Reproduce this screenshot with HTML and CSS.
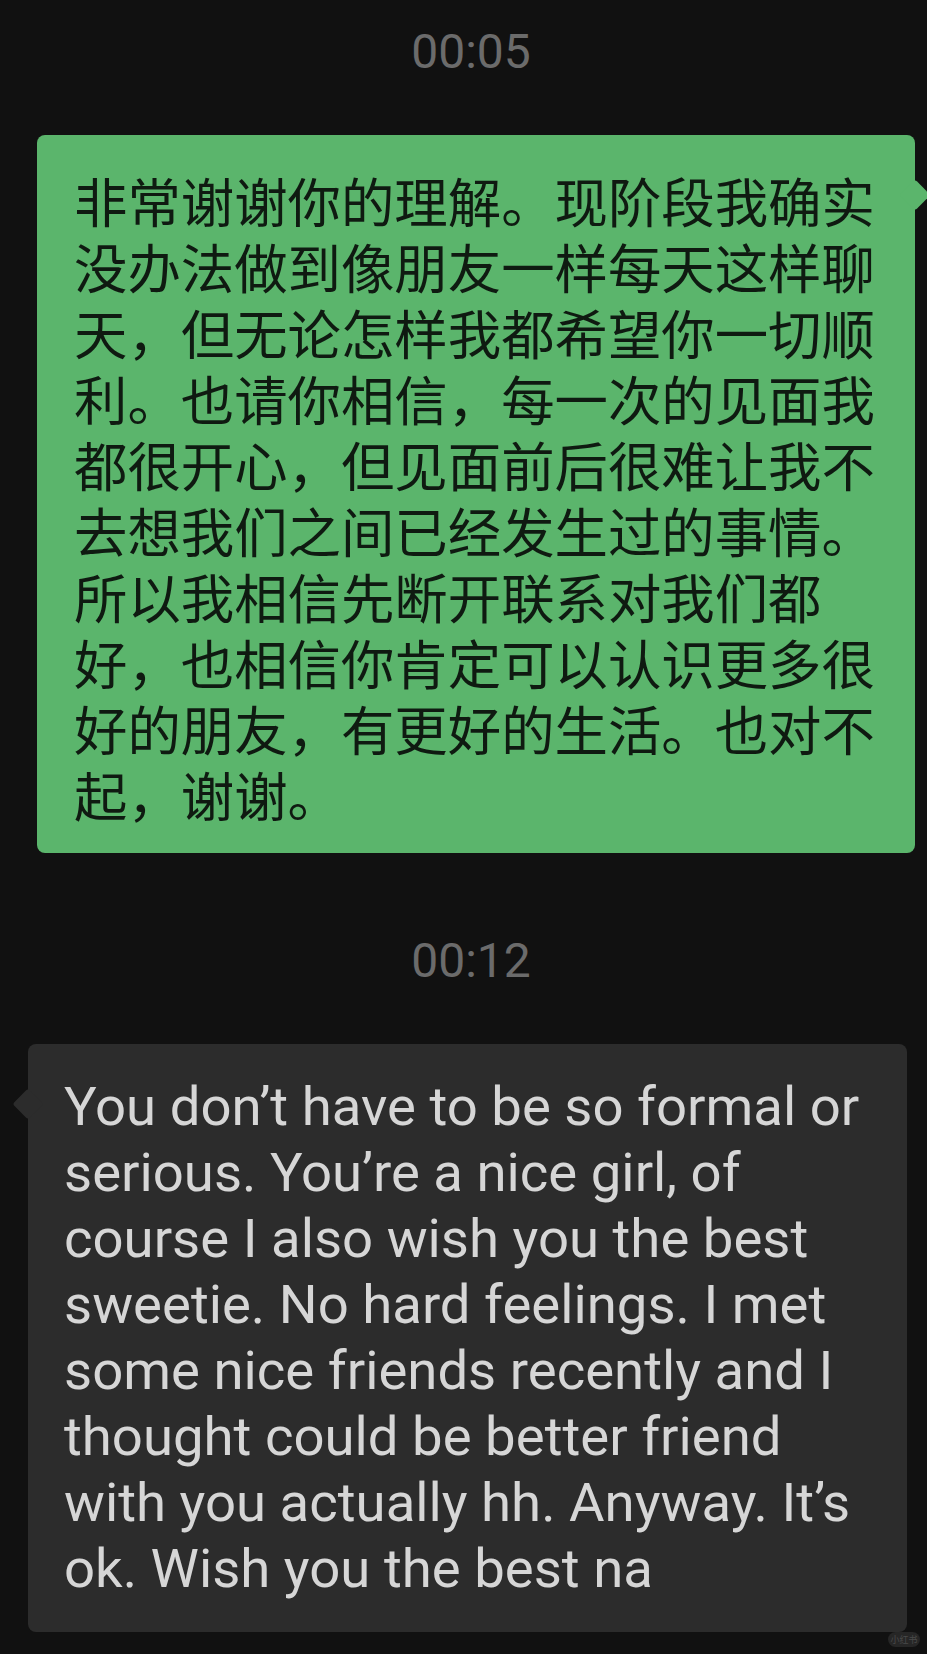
FILE: index.html
```html
<!DOCTYPE html>
<html lang="zh-CN">
<head>
<meta charset="utf-8">
<title>Chat</title>
<link rel="stylesheet" href="styles.css">
</head>
<body>
<main class="chat">
  <div class="time time-first">00:05</div>
  <div class="row row-sent">
    <div class="bubble bubble-sent">
      <p class="msg msg-zh">非常谢谢你的理解。现阶段我确实<br>没办法做到像朋友一样每天这样聊<br>天，但无论怎样我都希望你一切顺<br>利。也请你相信，每一次的见面我<br>都很开心，但见面前后很难让我不<br>去想我们之间已经发生过的事情。<br>所以我相信先断开联系对我们都<br>好，也相信你肯定可以认识更多很<br>好的朋友，有更好的生活。也对不<br>起，谢谢。</p>
    </div>
  </div>
  <div class="time time-second">00:12</div>
  <div class="row row-recv">
    <div class="bubble bubble-recv">
      <p class="msg msg-en">You don’t have to be so formal or<br>serious. You’re a nice girl, of<br>course I also wish you the best<br>sweetie. No hard feelings. I met<br>some nice friends recently and I<br>thought could be better friend<br>with you actually hh. Anyway. It’s<br>ok. Wish you the best na</p>
    </div>
  </div>
  <div class="watermark">小红书</div>
</main>
</body>
</html>
```
FILE: styles.css
```css
html, body {
  margin: 0;
  padding: 0;
  background: #111111;
}
body {
  width: 927px;
  height: 1654px;
  overflow: hidden;
}
.chat {
  position: relative;
  display: flex;
  flex-direction: column;
  height: 1654px;
  box-sizing: border-box;
  padding-top: 24px;
}
.time {
  font-family: Roboto, "Liberation Sans", sans-serif;
  font-size: 48px;
  line-height: 56px;
  color: #6b6b6b;
  text-align: center;
  padding-left: 15px;
}
.time-second {
  margin-top: 80px;
}
.row {
  display: flex;
}
.row-sent {
  justify-content: flex-end;
  margin-top: 55px;
  padding-right: 12px;
}
.row-recv {
  justify-content: flex-start;
  margin-top: 55px;
  padding-left: 28px;
}
.bubble {
  position: relative;
  border-radius: 8px;
  box-sizing: border-box;
}
.bubble::before {
  content: "";
  position: absolute;
  top: 49px;
  width: 22px;
  height: 22px;
  border-radius: 3px;
  transform: rotate(45deg);
}
.bubble-sent {
  width: 878px;
  background: #5bb56c;
  padding: 32px 16px 26px 37px;
}
.bubble-sent::before {
  right: -11px;
  background: #5bb56c;
}
.bubble-recv {
  width: 879px;
  background: #2c2c2c;
  padding: 29px 12px 31px 36px;
}
.bubble-recv::before {
  left: -11px;
  background: #2c2c2c;
}
.msg {
  margin: 0;
  position: relative;
  white-space: nowrap;
}
.msg-zh {
  font-family: "Noto Sans CJK SC", sans-serif;
  font-size: 53.4px;
  line-height: 66px;
  color: #0f1a11;
}
.msg-en {
  font-family: Roboto, "Liberation Sans", sans-serif;
  font-size: 54.5px;
  line-height: 66px;
  color: #d6d6d6;
}
.watermark {
  position: absolute;
  left: 888px;
  top: 1632px;
  width: 32px;
  height: 15px;
  border-radius: 8px;
  background: #262626;
  color: #4a4a4a;
  font-family: "Noto Sans CJK SC", sans-serif;
  font-size: 9px;
  line-height: 15px;
  text-align: center;
}
```
